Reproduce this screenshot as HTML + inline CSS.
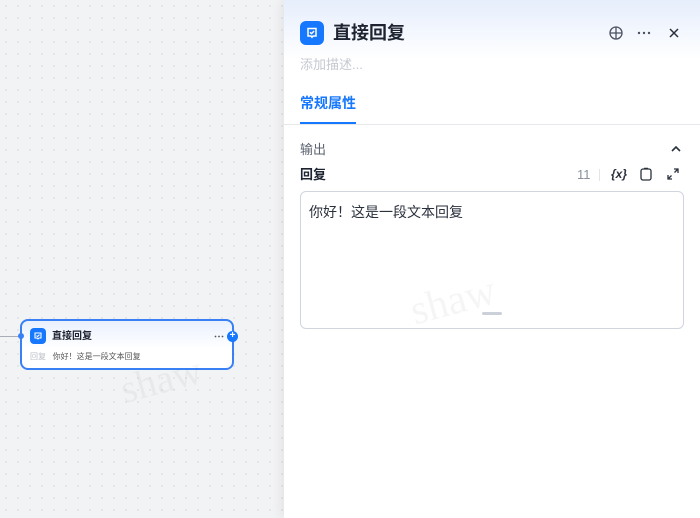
<!DOCTYPE html>
<html><head><meta charset="utf-8"><style>
*{margin:0;padding:0;box-sizing:border-box}
body{width:700px;height:518px;overflow:hidden;position:relative;font-family:"Liberation Sans","Noto Sans CJK SC",sans-serif;background:#f2f3f5;background-image:radial-gradient(#dcdee3 0.7px,transparent 1px);background-size:12px 12px;line-height:1}
.a{position:absolute;line-height:1}
.panel{left:284px;top:0;width:416px;height:518px;background:#fff;box-shadow:-4px 0 10px rgba(0,0,0,0.06)}
.panel:before{content:"";position:absolute;left:0;top:0;right:0;height:60px;background:linear-gradient(#e6eefc,#fff)}
</style></head><body>
<div class="a" style="left:0;top:336px;width:20px;height:1px;background:#a8adb7"></div>
<div class="a" style="left:20px;top:319px;width:214px;height:51px;border:2px solid #3a80f5;border-radius:8px;background:linear-gradient(#eaf1fe,#fff 60%)"></div>
<div class="a" style="left:18px;top:333px;width:6px;height:6px;border-radius:50%;background:#3a80f5"></div>
<div class="a" style="left:30px;top:328px;width:16px;height:16px;border-radius:4px;background:#1677ff"><svg width="16" height="16" viewBox="0 0 16 16"><path d="M5 5h6v5h-2l-1 1-1-1H5z" fill="none" stroke="#fff" stroke-width="1.1"/><path d="M6.5 7.6l1 1 2-2" fill="none" stroke="#fff" stroke-width="1"/></svg></div>
<div class="a" style="left:52px;top:332px;font-size:10px;font-weight:bold;color:#1d2330">直接回复</div>
<svg class="a" style="left:214px;top:335px" width="10" height="3" viewBox="0 0 10 3"><circle cx="1.5" cy="1.5" r="0.9" fill="#555"/><circle cx="5" cy="1.5" r="0.9" fill="#555"/><circle cx="8.5" cy="1.5" r="0.9" fill="#555"/></svg>
<div class="a" style="left:227px;top:331px;width:11px;height:11px;border-radius:50%;background:#1677ff;color:#fff;font-size:10px;line-height:10px;text-align:center;font-weight:bold">+</div>
<div class="a" style="left:30px;top:353px;font-size:8px;color:#aab"><span style="color:#b8bcc5">回复</span>&nbsp;&nbsp;&nbsp;<span style="color:#555">你好！这是一段文本回复</span></div>
<div class="a" style="left:120px;top:360px;font-family:'Liberation Serif',serif;font-size:40px;color:rgba(0,0,0,0.04);transform:rotate(-15deg)">shaw</div>

<div class="a panel">
<div class="a" style="left:16px;top:21px;width:24px;height:24px;border-radius:6px;background:#1677ff"><svg width="24" height="24" viewBox="0 0 24 24"><path d="M8 7.5h8v7.5h-3l-1 1.3-1-1.3H8z" fill="none" stroke="#fff" stroke-width="1.5"/><path d="M10 11.2l1.5 1.4 2.6-2.6" fill="none" stroke="#fff" stroke-width="1.4"/></svg></div>
<div class="a" style="left:49px;top:24px;font-size:18px;font-weight:bold;color:#1d2330">直接回复</div>
<svg class="a" style="left:325px;top:26px" width="14" height="14" viewBox="0 0 14 14"><circle cx="7" cy="7" r="6" fill="none" stroke="#4a5160" stroke-width="1.3"/><path d="M7 1v12M1 7h12" stroke="#4a5160" stroke-width="1.3"/></svg>
<svg class="a" style="left:353px;top:31px" width="14" height="4" viewBox="0 0 14 4"><circle cx="2" cy="2" r="1.2" fill="#4a5160"/><circle cx="7" cy="2" r="1.2" fill="#4a5160"/><circle cx="12" cy="2" r="1.2" fill="#4a5160"/></svg>
<svg class="a" style="left:385px;top:28px" width="10" height="10" viewBox="0 0 10 10"><path d="M1 1l8 8M9 1l-8 8" stroke="#2a303c" stroke-width="1.5"/></svg>
<div class="a" style="left:16px;top:58px;font-size:13px;color:#c4c8d0">添加描述...</div>
<div class="a" style="left:16px;top:96px;font-size:14px;font-weight:bold;color:#1677ff">常规属性</div>
<div class="a" style="left:16px;top:122px;width:56px;height:2px;background:#1677ff"></div>
<div class="a" style="left:0;top:124px;width:416px;height:1px;background:#e6e8eb"></div>
<div class="a" style="left:16px;top:143px;font-size:13px;color:#5c6370">输出</div>
<svg class="a" style="left:387px;top:145px" width="10" height="7" viewBox="0 0 10 7"><path d="M1 6l4-4 4 4" fill="none" stroke="#2a303c" stroke-width="1.6"/></svg>
<div class="a" style="left:16px;top:168px;font-size:13px;font-weight:bold;color:#1d2330">回复</div>
<div class="a" style="left:293px;top:168px;font-size:13px;color:#8a909c">11</div>
<div class="a" style="left:315px;top:169px;width:1px;height:12px;background:#e2e4e8"></div>
<div class="a" style="left:327px;top:168px;font-size:12px;font-weight:bold;font-style:italic;color:#2a303c">{x}</div>
<svg class="a" style="left:356px;top:167px" width="12" height="14" viewBox="0 0 12 14"><rect x="1" y="2" width="10" height="11" rx="2" fill="none" stroke="#2a303c" stroke-width="1.3"/><path d="M4 1.5h4" stroke="#2a303c" stroke-width="1.5"/></svg>
<svg class="a" style="left:383px;top:168px" width="12" height="12" viewBox="0 0 12 12"><path d="M7 1h4v4M11 1L7.5 4.5M5 11H1V7M1 11l3.5-3.5" fill="none" stroke="#2a303c" stroke-width="1.3"/></svg>
<div class="a" style="left:16px;top:191px;width:384px;height:138px;border:1px solid #d0d5de;border-radius:6px"></div>
<div class="a" style="left:25px;top:205px;font-size:14px;color:#2a303c">你好！这是一段文本回复</div>
<div class="a" style="left:198px;top:312px;width:20px;height:3px;border-radius:2px;background:#ccd0d8"></div>
<div class="a" style="left:126px;top:280px;font-family:'Liberation Serif',serif;font-size:42px;color:rgba(0,0,0,0.04);transform:rotate(-15deg)">shaw</div>
</div>
</body></html>
